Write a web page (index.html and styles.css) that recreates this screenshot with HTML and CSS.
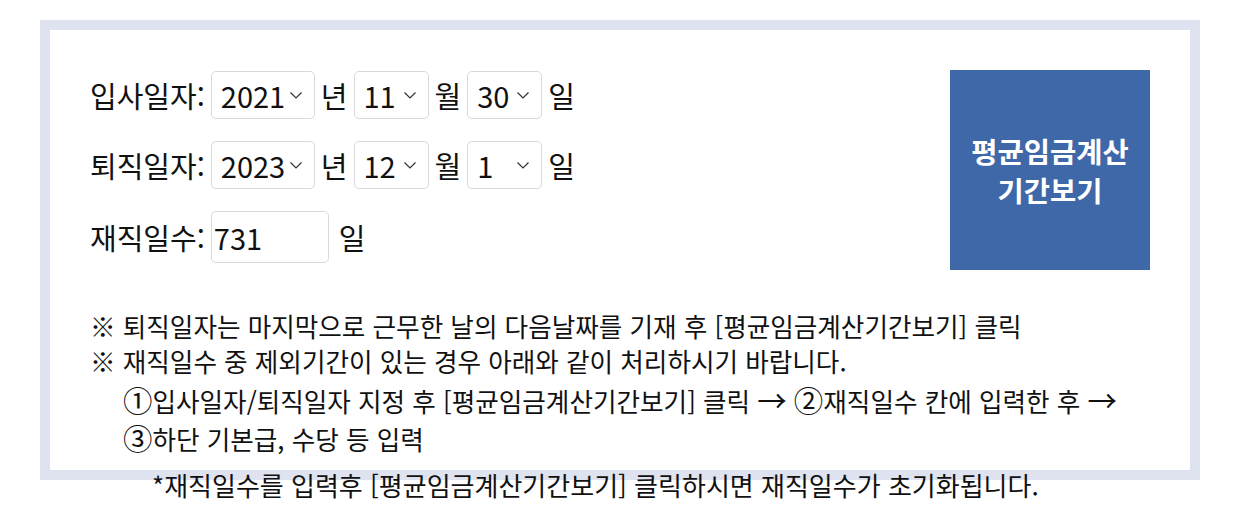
FILE: index.html
```html
<!DOCTYPE html>
<html lang="ko">
<head>
    <meta charset="UTF-8">
    <meta name="viewport" content="width=device-width, initial-scale=1.0">
    <title>평균임금 계산</title>
    <link rel="stylesheet" href="styles.css">
</head>
<body>

<div class="calc-box">
    <div class="calc-top">
        <div class="calc-form">
            <div class="row">
                <span class="lbl">입사일자:</span>
                <select class="sel-year"><option>2021</option></select>
                <span>년</span>
                <select class="sel-md"><option>11</option></select>
                <span>월</span>
                <select class="sel-md"><option>30</option></select>
                <span>일</span>
            </div>
            <div class="row">
                <span class="lbl">퇴직일자:</span>
                <select class="sel-year"><option>2023</option></select>
                <span>년</span>
                <select class="sel-md"><option>12</option></select>
                <span>월</span>
                <select class="sel-md"><option>1</option></select>
                <span>일</span>
            </div>
            <div class="row">
                <span class="lbl">재직일수:</span>
                <input type="text" class="days" value="731">
                <span class="unit">일</span>
            </div>
        </div>
        <button class="btn-calc">평균임금계산<br>기간보기</button>
    </div>

    <div class="notes">
        <p>※ 퇴직일자는 마지막으로 근무한 날의 다음날짜를 기재 후 [평균임금계산기간보기] 클릭</p>
        <p>※ 재직일수 중 제외기간이 있는 경우 아래와 같이 처리하시기 바랍니다.</p>
        <p class="step"><span class="mark">①</span>입사일자/퇴직일자 지정 후 [평균임금계산기간보기] 클릭 <span class="mark">→</span> <span class="mark">②</span>재직일수 칸에 입력한 후 <span class="mark">→</span><br><span class="mark">③</span>하단 기본급, 수당 등 입력</p>
        <p class="sub">*재직일수를 입력후 [평균임금계산기간보기] 클릭하시면 재직일수가 초기화됩니다.</p>
    </div>
</div>

</body>
</html>
```

FILE: styles.css
```css
body { margin: 0; min-height: 540px; font-family: 'Noto Sans CJK KR', 'Noto Sans', sans-serif; color: #111; background: #fff; }

.calc-box { width: 1160px; height: 460px; box-sizing: border-box; margin: 20px 0 0 40px; padding: 40px; border: 10px solid #dfe3f0; }
.calc-top { display: flex; justify-content: space-between; align-items: flex-start; }
.calc-form { display: flex; flex-direction: column; gap: 22px; margin-top: 1px; }

.row { display: flex; align-items: center; gap: 6px; font-size: 29px; }
.row .unit { margin-left: 4px; }

select { appearance: none; -webkit-appearance: none; height: 48px; padding: 0 0 0 9px; font: inherit; color: #111; border: 1px solid #d9d9d9; border-radius: 5px; background: #fff url("data:image/svg+xml,%3Csvg xmlns='http://www.w3.org/2000/svg' width='12' height='7'%3E%3Cpolyline points='0.5,0.5 6,6 11.5,0.5' fill='none' stroke='%23333' stroke-width='1.2'/%3E%3C/svg%3E") no-repeat right 12px center; }
.sel-year { width: 104px; }
.sel-md { width: 75px; }

.days { width: 118px; height: 52px; box-sizing: border-box; padding: 0 2px; font: inherit; color: #111; border: 1px solid #d9d9d9; border-radius: 5px; }

.btn-calc { width: 200px; height: 200px; border: none; background: #3f68a8; color: #fff; font-family: inherit; font-size: 28.5px; font-weight: bold; line-height: 39px; cursor: pointer; }

.notes { margin-top: 38px; font-size: 25.6px; line-height: 35px; }
.notes p { margin: 0; }
.notes .step { padding-left: 33px; margin-top: 3px; line-height: 37px; }
.notes .mark { font-size: 1.15em; }
.notes .sub { padding-left: 62px; margin-top: 10px; font-size: 26px; }
```
